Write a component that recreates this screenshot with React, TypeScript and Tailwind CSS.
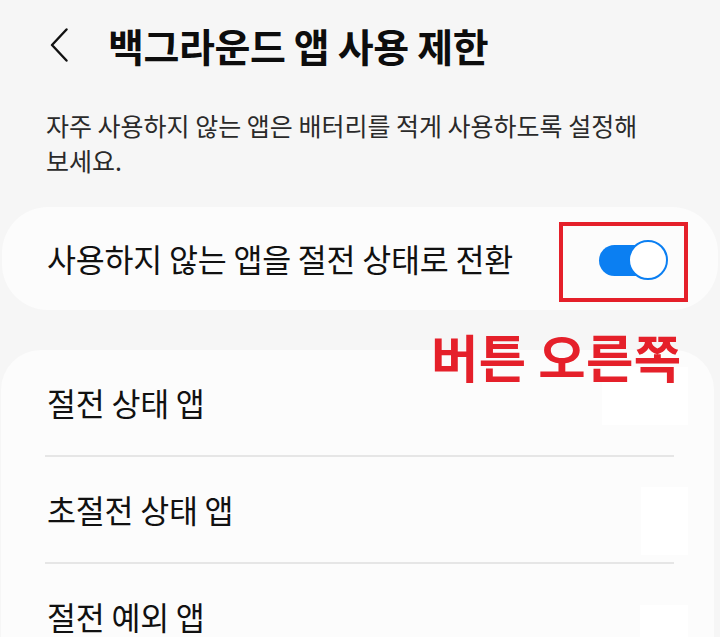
import React from "react";

const font = { fontFamily: '"Noto Sans CJK KR", "Noto Sans", sans-serif' };

function Toggle() {
  return (
    <div className="relative w-[69px] h-[40px] shrink-0">
      <div className="absolute left-0 top-[5px] w-[60px] h-[31px] rounded-full bg-[#0b7ff2]" />
      <div className="absolute right-0 top-0 w-[40px] h-[40px] rounded-full bg-white border-2 border-[#0b7ff2]" />
    </div>
  );
}

function Row({
  label,
  patch,
  last,
}: {
  label: string;
  patch: string;
  last?: boolean;
}) {
  return (
    <div>
      <div className="flex items-center justify-between h-[105px] pl-[46px] pr-[26px]">
        <span className="text-[31.5px] leading-none text-[#111111] tracking-[-0.2px]">{label}</span>
        <div className={patch} />
      </div>
      {!last && <div className="ml-[44px] mr-[40px] h-[2px] bg-[#e6e6e6]" />}
    </div>
  );
}

export default function App() {
  return (
    <div
      className="relative w-[720px] h-[637px] overflow-hidden bg-[#f6f6f6]"
      style={font}
    >
      {/* Header */}
      <div className="flex items-center h-[90px] pl-[50px] gap-[40px]">
        <svg width="18" height="34" viewBox="0 0 18 34" fill="none">
          <path
            d="M16.5 1.5 L2 17 L16.5 32.5"
            stroke="#111111"
            strokeWidth="2.4"
            strokeLinecap="round"
            strokeLinejoin="round"
          />
        </svg>
        <h1 className="text-[39px] font-bold leading-none text-[#0d0d0d] tracking-[-0.4px]">
          백그라운드 앱 사용 제한
        </h1>
      </div>

      {/* Description */}
      <div className="pt-[18px] pl-[46px] text-[25px] leading-[35px] text-[#2a2a2a]">
        <span className="block whitespace-nowrap">
          자주 사용하지 않는 앱은 배터리를 적게 사용하도록 설정해
        </span>
        <span className="block">보세요.</span>
      </div>

      {/* Toggle card */}
      <div className="mt-[29px] ml-[2px] w-[716px] h-[103px] rounded-[46px] bg-[#fcfcfc] flex items-center justify-between pl-[45px] pr-[50px]">
        <span className="text-[31.5px] leading-none text-[#111111] tracking-[-0.2px] whitespace-nowrap">
          사용하지 않는 앱을 절전 상태로 전환
        </span>
        <div className="mt-[3px]">
          <Toggle />
        </div>
      </div>

      {/* List card */}
      <div className="mt-[40px] ml-[1px] w-[713px] rounded-t-[40px] bg-[#fcfcfc]">
        <Row label="절전 상태 앱" patch="self-start mt-[17px] w-[86px] h-[58px] bg-white" />
        <Row label="초절전 상태 앱" patch="self-start mt-[30px] w-[47px] h-[68px] bg-white" />
        <Row label="절전 예외 앱" patch="self-start mt-[41px] w-[48px] h-[60px] bg-white" last />
      </div>

      {/* Annotation overlays */}
      <div className="absolute left-[559px] top-[222px] w-[129px] h-[80px] border-4 border-[#e5202a]" />
      <div className="absolute left-[431px] top-[330px] text-[51.5px] font-bold leading-none text-[#e5202a] tracking-[0.3px] whitespace-nowrap">
        버튼 오른쪽
      </div>
    </div>
  );
}
